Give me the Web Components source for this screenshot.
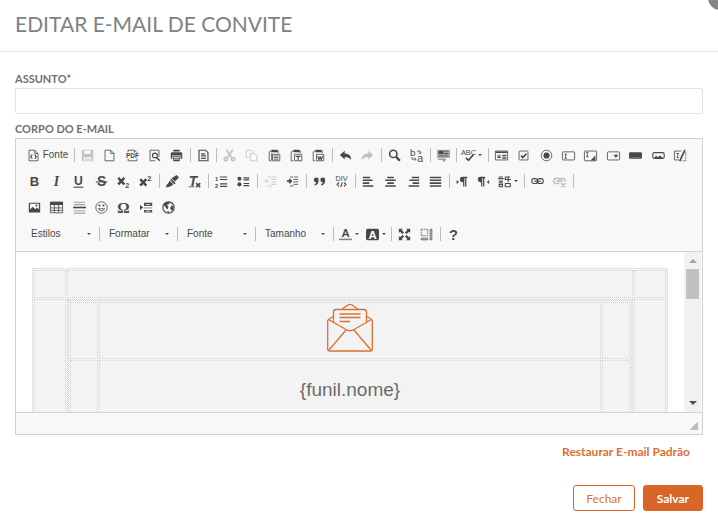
<!DOCTYPE html>
<html lang="pt-BR">
<head>
<meta charset="utf-8">
<title>Editar e-mail de convite</title>
<style>
  body {
    margin: 0;
    background: #fff;
    color: #6f7073;
    font-family: Lato, "Open Sans", sans-serif;
    overflow: hidden;
  }
</style>
</head>
<body>
<invite-dialog>
  <span slot="title">EDITAR E-MAIL DE CONVITE</span>
  <subject-field></subject-field>
  <mail-editor></mail-editor>
</invite-dialog>

<script>
const ICONS = {
  source: `<path class="l" d="M2.500 1.500h7l4 4v9h-11zM9.500 1.500v4h4"/><path class="m" d="M6.500 7l-2 2.500 2 2.500M9.500 7l2 2.500-2 2.500"/>`,
  save: `<path d="M1 1h3v5h8V1h3v14h-2v-5H3v5H1z"/><path class="l" d="M4.500 1.500h7M4 12.500h8M4 14.500h8"/>`,
  page: `<path class="l" d="M2.500 1.500h7l4 4v9h-11zM9.500 1.500v4h4"/>`,
  pdf: `<path class="l" d="M2.500 4V1.500h8l3 3M2.500 12v2.500h11V12M10.500 1.500v3"/><text x="8" y="11" font-size="8" font-weight="700" text-anchor="middle">PDF</text>`,
  preview: `<path class="l" d="M13.500 10V1.500h-11v13H9"/><circle class="m" cx="8.500" cy="8" r="3"/><path class="b" d="M10.500 10.500l4 4"/>`,
  print: `<path d="M4 1h8v2H4zM2 4h12l1 1v7h-2V8H3v4H1V5zM4 9h8v6H4z"/><path stroke="#f8f8f8" d="M5 10.500h6M5 12.500h6"/>`,
  template: `<path class="m" d="M2.500 1.500h8l3 3v10h-11z"/><path class="m" d="M5 6h5M5 8.500h6M5 11.500h6"/>`,
  cut: `<path class="b" d="M4 1l7 10M12 1L5 11"/><circle class="b" cx="3.500" cy="12.500" r="2"/><circle class="b" cx="12.500" cy="12.500" r="2"/>`,
  copy: `<path class="l" d="M4.500 10.500h-3v-9h6l2 2v1M6.500 5.500h5l3 3v6h-8z"/>`,
  paste: `<path class="l" d="M4 14.500H1.500V3.500l2-1"/><path d="M4 1h8v3H4z"/><path class="l" d="M12.500 2v3M5.500 6.500h9v8h-9zM4.500 5v9"/><path class="l" d="M7 8.500h6M7 10.500h6M7 12.500h6"/>`,
  pasteText: `<path class="l" d="M4 14.500H1.500V3.500l2-1"/><path d="M4 1h8v3H4z"/><path class="l" d="M12.500 2v3M5.500 6.500h9v8h-9z"/><path class="m" d="M7 9h6M10 9v5"/>`,
  pasteWord: `<path class="l" d="M4 14.500H1.500V3.500l2-1"/><path d="M4 1h8v3H4z"/><path class="l" d="M12.500 2v3M5.500 6.500h9v8h-9z"/><path class="m" d="M7 8.500l1.500 4.500 1.500-3 1.500 3L13 8.500"/>`,
  undo: `<path d="M1 7.500L7 2v3.500c5 0 8 2.500 8 8-2-3-4-3.500-8-3.500v3z"/>`,
  redo: `<path d="M15 7.500L9 2v3.500c-5 0-8 2.500-8 8C3 10.500 5 10 9 10v3z"/>`,
  find: `<circle class="b" cx="6.500" cy="6" r="4.500"/><path stroke-width="3" class="s" d="M10 9.500l4.500 5"/>`,
  replace: `<text x="0" y="8" font-size="12">b</text><text x="9" y="16" font-size="13">a</text><path class="l" d="M8.500 2.500h4V6M2.500 10v2.500H7M5.500 10.500l2 2-2 2M11 4.500L12.500 6 14 4.500"/>`,
  selectAll: `<path fill="#aaa" d="M0 1h16v10H0z"/><path d="M2 2h6v4H2zM9 2h5v1H9zM9 5h5v1H9zM2 8h12v1H2zM1 12h10v1H1zM7 14h3v1H7z"/>`,
  spell: `<text x="8" y="7.500" font-size="9" text-anchor="middle">ABC</text><path class="b" d="M5 11l3 3 6-7"/>`,
  form: `<path class="l" d="M.5 2.500h15v11H.5z"/><path d="M1 3h14v2H1zM3 7h4v1H3zM3 9h4v2H3zM9 7h5v2H9zM9 10h5v2H9z"/>`,
  checkbox: `<rect class="l" x="2.500" y="2.500" width="11" height="11" rx="1"/><path class="b" d="M5 8l2 2.500L11.500 6"/>`,
  radio: `<circle class="l" cx="8" cy="8" r="6.500"/><circle cx="8" cy="8" r="3.800"/>`,
  textField: `<rect class="l" x=".5" y="3.500" width="15" height="10" rx="1"/><path class="l" d="M3 6.500h3M4.500 6v5M3 11.500h3"/>`,
  textarea: `<rect class="l" x=".5" y="2.500" width="15" height="12" rx="1"/><path class="l" d="M2.500 4.500h3M4 4v6M2.500 9.500h3"/><path d="M14 8v6H8z"/>`,
  selectField: `<rect class="l" x=".5" y="3.500" width="15" height="10" rx="1"/><path d="M8 7h6l-3 4z"/>`,
  button: `<rect x="0" y="4" width="16" height="8" rx="1.500"/><path stroke="#777" d="M1 10.500h14"/>`,
  imageButton: `<rect class="m" x="1" y="4.500" width="14" height="7" rx="2"/><path d="M3 11l2-3 2 2 3-2 3 3z"/>`,
  hidden: `<path class="l" d="M9 2.500H.5v11H6M3 5.500h3M4.500 5v6M3 10.500h3"/><path class="b" d="M13.500 1L7 15"/><path class="l" stroke-dasharray="2 1" d="M14.500 4v10.500H9"/>`,
  bold: `<text x="8" y="14" font-size="16" font-weight="700" text-anchor="middle">B</text>`,
  italic: `<text x="8" y="14" font-size="17" font-weight="700" font-style="italic" font-family="Liberation Serif, serif" text-anchor="middle">I</text>`,
  underline: `<text x="8" y="12" font-size="15" font-weight="700" text-anchor="middle">U</text><path class="m" d="M2 15h12"/>`,
  strike: `<text x="8" y="14" font-size="17" font-weight="700" text-anchor="middle">S</text><path class="m" d="M1 8.500h14"/>`,
  sub: `<path stroke-width="3" class="s" d="M1.500 3.500l7.500 8M9 3.500l-7.500 8"/><text x="10" y="16" font-size="9" font-weight="700">2</text>`,
  sup: `<path stroke-width="3" class="s" d="M1.500 5l7.500 8M9 5l-7.500 8"/><text x="10" y="7" font-size="9" font-weight="700">2</text>`,
  brush: `<path d="M13 0l3 3-5 5-4-4zM6.500 4.500L12 10l-2 1.500L5 6zM4.500 7L9 11.500C7 14 4 15 0 15c0-3.500 2.500-3.500 4.500-8z"/>`,
  removeFormat: `<text x="6" y="13" font-size="17" font-weight="700" font-style="italic" text-anchor="middle">T</text><path class="l" d="M1 14.500h7"/><path class="b" d="M10 10l5 5M15 10l-5 5"/>`,
  numbered: `<text x="0" y="7" font-size="7" font-weight="700">1</text><text x="0" y="16" font-size="7" font-weight="700">2</text><path class="m" d="M6 2.500h9M6 5.500h9M6 11h9M6 14h9"/>`,
  bulleted: `<circle cx="3" cy="4.500" r="2.500"/><circle cx="3" cy="11.500" r="2.500"/><path class="m" d="M8 3.500h7M8 6h7M8 10.500h7M8 13h7"/>`,
  outdent: `<path class="l" d="M5 2.500h4M10 2.500h5M9 5.500h6M9 8.500h6M9 11.500h6M5 13.500h4M1 7.500h6M4 5L1.500 7.500 4 10"/>`,
  indent: `<path class="l" d="M5 2.500h4M10 2.500h5M9 5.500h6M9 8.500h6M9 11.500h6M5 13.500h4"/><path class="b" d="M1 7.500h5M4 5l2.500 2.500L4 10"/>`,
  quote: `<path d="M4 3a3 3 0 0 1 3 3c0 4-1.500 6-5 7v-1.500c1.500-.7 2-1.500 2-2.500a3 3 0 0 1 0-6zM12 3a3 3 0 0 1 3 3c0 4-1.500 6-5 7v-1.500c1.500-.7 2-1.500 2-2.500a3 3 0 0 1 0-6z"/>`,
  div: `<text x="8" y="7.500" font-size="9" text-anchor="middle">DIV</text><path class="m" d="M5 9l-2.500 2.500L5 14M11 9l2.500 2.500L11 14M9 9l-2 6"/>`,
  alignLeft: `<path class="b" d="M1 3h9M1 6.500h12M1 10h8M1 13.500h13"/>`,
  alignCenter: `<path class="b" d="M4 3h8M1.500 6.500h13M4 10h8M1.500 13.500h13"/>`,
  alignRight: `<path class="b" d="M6 3h9M3 6.500h12M7 10h8M2 13.500h13"/>`,
  justify: `<path class="b" d="M1 3h14M1 6.500h14M1 10h14M1 13.500h14"/>`,
  ltr: `<path d="M2 6l3 2.500L2 11zM9 2h6v2h-1v10h-1.500V4h-1v10H10V9a3.500 3.500 0 0 1-1-7z"/>`,
  rtl: `<path d="M15 6l-3 2.500 3 2.500zM4 2h6v2H9v10H7.500V4h-1v10H5V9a3.500 3.500 0 0 1-1-7z"/>`,
  language: `<path class="m" d="M1 2.500h5M0 4.500h7M1 7.500h5M1 9.500h5M1.500 11.500h4v3h-4zM9 2.500h6M12.500 2v7M8 5.500h8M9 10.500h6v4H9zM9 2v3"/>`,
  link: `<rect class="m" x="1" y="4.500" width="7" height="6" rx="2.500"/><rect class="m" x="8" y="4.500" width="7" height="6" rx="2.500"/><path class="m" d="M4 7.500h8"/>`,
  unlink: `<path class="b" d="M8 10.500H4A2 2 0 0 1 4 4h2.500Q8 4.500 8 7q0-2.500 2-2.500h3Q15.500 5 15 8M4 7.500h8M10 10l5 5M15 10l-5 5"/>`,
  image: `<path fill-rule="evenodd" d="M1 2h14v12H1zM2.500 3.500v7L6 7l3 3 2-2 2.500 2.500v-7z"/><circle cx="10.500" cy="5.500" r="1.200"/>`,
  table: `<path class="l" d="M.5 1.500h15v13H.5zM5.500 5v9M10.500 5v9M1 8.500h14M1 11.500h14"/><path d="M0 1h16v4H0z"/>`,
  rule: `<path class="m" stroke-opacity=".5" d="M1 1.500h14M1 4.500h14M1 12h14M1 15h14"/><path class="b" d="M0 8h16"/>`,
  smiley: `<circle class="l" cx="8" cy="8" r="7"/><circle cx="5.500" cy="5.500" r="1.300"/><circle cx="10.500" cy="5.500" r="1.300"/><path class="l" d="M4 9.500q4 5 8 0z"/>`,
  omega: `<text x="8" y="15" font-size="19" font-weight="700" text-anchor="middle" font-family="Liberation Serif, serif">Ω</text>`,
  pageBreak: `<path d="M0 5l4 3-4 3zM5 2h10v4H5zM5 11h10v3H5z"/><path class="l" stroke-dasharray="2 1" d="M5 8.500h10"/><path stroke="#f8f8f8" d="M7 4.500h6M7 12.500h6"/>`,
  globe: `<circle class="m" cx="8" cy="8" r="7"/><path d="M3 3q4-3 7-1L8 4 6 5l2 2-1 3-2-1-1-2-2-2zM12 5l2 2 0 3-2 2-2-3 1-2zM6 12l3 1-1 2z"/>`,
  color: `<text x="8" y="11" font-size="14" font-weight="700" text-anchor="middle">A</text><path fill="#888" d="M0 13h16v2H0z"/>`,
  background: `<rect x="0" y="1" width="16" height="14" rx="2"/><text x="8" y="13" font-size="14" font-weight="700" text-anchor="middle" style="fill:#fff">A</text>`,
  maximize: `<path d="M1 1h5L4.500 2.500l3 3-2 2-3-3L1 6zM15 1v5l-1.500-1.500-3 3-2-2 3-3L10 1zM1 15v-5l1.500 1.500 3-3 2 2-3 3L6 15zM15 15h-5l1.500-1.500-3-3 2-2 3 3L15 10z"/>`,
  blocks: `<path class="l" stroke-dasharray="2 1" d="M1.500 1.500h8v8h-8z"/><path class="l" d="M1.500 12.500h8v2h-8zM12.500 1.500h2v13h-2z"/>`,
  about: `<text x="8" y="15" font-size="18" font-weight="700" text-anchor="middle">?</text>`
};

class ToolIcon extends HTMLElement {
  constructor() {
    super();
    this.attachShadow({ mode: "open" });
  }

  static get styles() {
    return /* css */`
      :host {
        display: block;
        width: 13px;
        height: 13px;
      }

      svg {
        display: block;
        width: 100%;
        height: 100%;
        fill: #484848;
        overflow: visible;
        font-family: "Liberation Sans", Arial, sans-serif;
      }

      .l, .m, .b, .s { fill: none; stroke: #484848; }
      .m { stroke-width: 1.4; }
      .b { stroke-width: 2; }
    `;
  }

  connectedCallback() {
    this.shadowRoot.innerHTML = /* html */`
    <style>${ToolIcon.styles}</style>
    <svg viewBox="0 0 16 16" aria-hidden="true">${ICONS[this.getAttribute("name")]}</svg>`;
  }
}

/* Buttons between two separators: icons="a b-off c+" (off: disabled, +: has a menu) */
class ToolGroup extends HTMLElement {
  constructor() {
    super();
    this.attachShadow({ mode: "open" });
  }

  static get styles() {
    return /* css */`
      :host {
        display: flex;
        align-items: center;
        height: 26px;
      }

      .buttons {
        display: flex;
      }

      button {
        flex: 22 1 0;
        min-width: 0;
        height: 22px;
        padding: 0;
        border: 0;
        background: none;
        color: #484848;
        font: 10px/12px "Liberation Sans", Arial, sans-serif;
        display: flex;
        align-items: center;
        justify-content: center;
        gap: 3px;
      }

      button:disabled { opacity: .3; }
      .menu { flex-grow: 28; }

      .menu::after {
        content: "";
        border: 2px solid transparent;
        border-top-color: #484848;
        border-bottom: 0;
      }

      :host(:not([last]))::after {
        content: "";
        width: 1px;
        height: 14px;
        margin: 0 1px 0 2px;
        background: #bcbcbc;
      }
    `;
  }

  connectedCallback() {
    const label = this.getAttribute("label") ?? "";
    const buttons = this.getAttribute("icons").split(" ").map(item => {
      const name = item.replace(/-off|\+/g, "");
      return `<button type="button" aria-label="${label || name}"
        ${item.endsWith("-off") ? "disabled" : ""}
        ${item.endsWith("+") ? "class=\"menu\"" : ""}><tool-icon name="${name}"></tool-icon>${label}</button>`;
    }).join("");

    this.shadowRoot.innerHTML = /* html */`
    <style>${ToolGroup.styles}</style>
    <div class="buttons" style="width: ${this.getAttribute("width")}px">${buttons}</div>`;
  }
}

class ToolCombo extends HTMLElement {
  constructor() {
    super();
    this.attachShadow({ mode: "open" });
  }

  static get styles() {
    return /* css */`
      :host {
        display: flex;
        align-items: center;
        height: 26px;
      }

      label {
        display: flex;
        align-items: center;
        width: 74px;
      }

      select {
        appearance: none;
        flex: 1;
        min-width: 0;
        height: 22px;
        padding: 0 0 0 8px;
        border: 0;
        background: none;
        color: #484848;
        font: 10px/12px "Liberation Sans", Arial, sans-serif;
      }

      label::after {
        content: "";
        margin-right: 6px;
        border: 2px solid transparent;
        border-top-color: #484848;
        border-bottom: 0;
      }

      :host::after {
        content: "";
        width: 1px;
        height: 14px;
        margin: 0 1px 0 2px;
        background: #bcbcbc;
      }
    `;
  }

  connectedCallback() {
    const name = this.getAttribute("name");
    this.shadowRoot.innerHTML = /* html */`
    <style>${ToolCombo.styles}</style>
    <label><select aria-label="${name}"><option>${name}</option></select></label>`;
  }
}

class EditorToolbar extends HTMLElement {
  constructor() {
    super();
    this.attachShadow({ mode: "open" });
  }

  static get styles() {
    return /* css */`
      :host {
        display: block;
        padding: 3px 7px 4px;
        background: #f8f8f8;
        border-bottom: 1px solid #d1d1d1;
      }

      .row {
        display: flex;
        flex-wrap: wrap;
      }

      .combos { margin-top: 1px; }
    `;
  }

  connectedCallback() {
    this.shadowRoot.innerHTML = /* html */`
    <style>${EditorToolbar.styles}</style>
    <div class="row">
      <tool-group width="49" icons="source" label="Fonte"></tool-group>
      <tool-group width="112" icons="save-off page pdf preview print"></tool-group>
      <tool-group width="22" icons="template"></tool-group>
      <tool-group width="112" icons="cut-off copy-off paste pasteText pasteWord"></tool-group>
      <tool-group width="45" icons="undo redo-off"></tool-group>
      <tool-group width="45" icons="find replace"></tool-group>
      <tool-group width="22" icons="selectAll"></tool-group>
      <tool-group width="28" icons="spell+"></tool-group>
      <tool-group width="202" icons="form checkbox radio textField textarea selectField button imageButton hidden" last></tool-group>
    </div>
    <div class="row">
      <tool-group width="134" icons="bold italic underline strike sub sup"></tool-group>
      <tool-group width="45" icons="brush removeFormat"></tool-group>
      <tool-group width="45" icons="numbered bulleted"></tool-group>
      <tool-group width="45" icons="outdent-off indent"></tool-group>
      <tool-group width="45" icons="quote div"></tool-group>
      <tool-group width="90" icons="alignLeft alignCenter alignRight justify"></tool-group>
      <tool-group width="71" icons="ltr rtl language+"></tool-group>
      <tool-group width="45" icons="link unlink-off"></tool-group>
    </div>
    <div class="row">
      <tool-group width="157" icons="image table rule smiley omega pageBreak globe" last></tool-group>
    </div>
    <div class="row combos">
      <tool-combo name="Estilos"></tool-combo>
      <tool-combo name="Formatar"></tool-combo>
      <tool-combo name="Fonte"></tool-combo>
      <tool-combo name="Tamanho"></tool-combo>
      <tool-group width="54" icons="color+ background+"></tool-group>
      <tool-group width="45" icons="maximize blocks"></tool-group>
      <tool-group width="22" icons="about" last></tool-group>
    </div>`;
  }
}

class MailPreview extends HTMLElement {
  constructor() {
    super();
    this.attachShadow({ mode: "open" });
  }

  static get styles() {
    return /* css */`
      :host {
        display: block;
        flex: 1;
        min-width: 0;
        overflow: hidden;
        padding: 16px;
        box-sizing: border-box;
      }

      table {
        width: 100%;
        table-layout: fixed;
        border: 1px dotted #d3d3d3;
        border-spacing: 1px;
        background: #f3f3f3;
      }

      td {
        box-sizing: border-box;
        padding: 0;
        border: 1px dotted #d3d3d3;
        vertical-align: top;
        text-align: center;
      }

      .side { width: 32px; }
      .inner .side { width: 28px; }
      .gap { height: 28px; }
      .logo { height: 57px; }

      svg {
        display: block;
        margin: 0 auto;
        width: 48px;
        height: 50px;
      }

      .name {
        height: 200px;
        padding-top: 18px;
        color: #6b6b6b;
        font: 19px/22px "Liberation Sans", Arial, sans-serif;
      }
    `;
  }

  connectedCallback() {
    this.shadowRoot.innerHTML = /* html */`
    <style>${MailPreview.styles}</style>
    <table>
      <tr><td class="side gap"></td><td></td><td class="side"></td></tr>
      <tr>
        <td></td>
        <td>
          <table class="inner">
            <tr>
              <td class="side logo"></td>
              <td>
                <svg viewBox="0 0 48 50" fill="none" stroke="#dc7032" stroke-width="1.300" stroke-linejoin="round">
                  <path d="M8 13l-5 3q-1.300 1-1.300 2v28q0 2 2 2h40.600q2 0 2-2V18q0-1-1.300-2l-5-3"/>
                  <path d="M7.500 19V9q0-2.500 2.500-2.500h28q2.500 0 2.500 2.500v10"/>
                  <path d="M15.500 6.500L22 2q2-1.300 4 0l6.500 4.500"/>
                  <path d="M2.500 16.500L20 26.500q4 2.500 8 0l17.500-10M3 47l17.500-20.500M45 47L27.500 26.500"/>
                  <path d="M13.500 11h21M13.500 14.500h21M13.500 18.500H24"/>
                </svg>
              </td>
              <td class="side"></td>
            </tr>
            <tr><td></td><td class="name">{funil.nome}</td><td></td></tr>
          </table>
        </td>
        <td></td>
      </tr>
    </table>`;
  }
}

class MailEditor extends HTMLElement {
  constructor() {
    super();
    this.attachShadow({ mode: "open" });
  }

  static get styles() {
    return /* css */`
      :host {
        display: block;
      }

      h2 {
        margin: 0 0 1px;
        font-size: 11px;
        line-height: 16px;
        font-weight: 700;
      }

      .frame { border: 1px solid #d1d1d1; }

      .content {
        display: flex;
        height: 160px;
      }

      .scroll {
        width: 17px;
        margin-right: 1px;
        padding: 7px 0;
        box-sizing: border-box;
        background: #f1f1f1;
        display: flex;
        flex-direction: column;
        align-items: center;
      }

      .up, .down {
        border: 4px solid transparent;
      }

      .up {
        border-top: 0;
        border-bottom-color: #a3a3a3;
      }

      .down {
        margin-top: auto;
        border-bottom: 0;
        border-top-color: #505050;
      }

      .thumb {
        width: 13px;
        height: 30px;
        margin-top: 6px;
        background: #c1c1c1;
      }

      .bottom {
        height: 22px;
        padding: 0 4px 4px;
        box-sizing: border-box;
        background: #f8f8f8;
        border-top: 1px solid #d1d1d1;
        display: flex;
        align-items: flex-end;
        justify-content: flex-end;
      }

      .bottom::after {
        content: "";
        width: 8px;
        height: 8px;
        background: linear-gradient(135deg, transparent 50%, #bcbcbc 50%);
      }
    `;
  }

  connectedCallback() {
    this.shadowRoot.innerHTML = /* html */`
    <style>${MailEditor.styles}</style>
    <h2>CORPO DO E-MAIL</h2>
    <div class="frame">
      <editor-toolbar></editor-toolbar>
      <div class="content">
        <mail-preview></mail-preview>
        <div class="scroll"><i class="up"></i><i class="thumb"></i><i class="down"></i></div>
      </div>
      <div class="bottom"></div>
    </div>`;
  }
}

class SubjectField extends HTMLElement {
  constructor() {
    super();
    this.attachShadow({ mode: "open" });
  }

  static get styles() {
    return /* css */`
      :host {
        display: block;
        margin-bottom: 7px;
      }

      label {
        display: block;
        margin-bottom: 1px;
        font-size: 11px;
        line-height: 16px;
        font-weight: 700;
      }

      input {
        display: block;
        width: 100%;
        height: 26px;
        box-sizing: border-box;
        padding: 0 8px;
        border: 1px solid #e2e2e2;
        border-radius: 2px;
        color: inherit;
        font: inherit;
        font-size: 12px;
      }
    `;
  }

  connectedCallback() {
    this.shadowRoot.innerHTML = /* html */`
    <style>${SubjectField.styles}</style>
    <label for="subject">ASSUNTO*</label>
    <input id="subject" type="text">`;
  }
}

class InviteDialog extends HTMLElement {
  constructor() {
    super();
    this.attachShadow({ mode: "open" });
  }

  static get styles() {
    return /* css */`
      :host {
        display: block;
        position: relative;
      }

      header {
        padding: 10px 15px 13px;
        border-bottom: 1px solid #e2e2e2;
      }

      h1 {
        margin: 0;
        color: #808184;
        font-size: 21px;
        line-height: 28px;
        font-weight: 400;
      }

      /* Round close button, hanging over the corner */
      .close {
        position: absolute;
        top: -14px;
        right: -14px;
        width: 24px;
        height: 24px;
        padding: 0;
        border: 0;
        border-radius: 50%;
        background: #858585;
      }

      main { padding: 19px 15px 0; }

      .restore {
        display: flex;
        justify-content: flex-end;
        padding: 9px 13px 0;
      }

      a {
        color: #dc7032;
        font-size: 12px;
        line-height: 16px;
        font-weight: 700;
        text-decoration: none;
      }

      footer {
        display: flex;
        justify-content: flex-end;
        gap: 8px;
        padding-top: 25px;
      }

      footer button {
        height: 26px;
        padding: 0 12px;
        border: 1px solid #d96528;
        border-radius: 3px;
        background: #fff;
        color: #dc7032;
        font: inherit;
        font-size: 12px;
      }

      footer .primary {
        padding: 0 13px;
        background: #d96528;
        color: #fff;
        font-weight: 700;
      }
    `;
  }

  connectedCallback() {
    this.shadowRoot.innerHTML = /* html */`
    <style>${InviteDialog.styles}</style>
    <header><h1><slot name="title"></slot></h1></header>
    <button class="close" type="button" aria-label="Fechar janela"></button>
    <main>
      <slot></slot>
      <div class="restore"><a href="#">Restaurar E-mail Padrão</a></div>
      <footer>
        <button type="button">Fechar</button>
        <button type="button" class="primary">Salvar</button>
      </footer>
    </main>`;
  }
}

customElements.define("tool-icon", ToolIcon);
customElements.define("tool-group", ToolGroup);
customElements.define("tool-combo", ToolCombo);
customElements.define("editor-toolbar", EditorToolbar);
customElements.define("mail-preview", MailPreview);
customElements.define("mail-editor", MailEditor);
customElements.define("subject-field", SubjectField);
customElements.define("invite-dialog", InviteDialog);
</script>
</body>
</html>
